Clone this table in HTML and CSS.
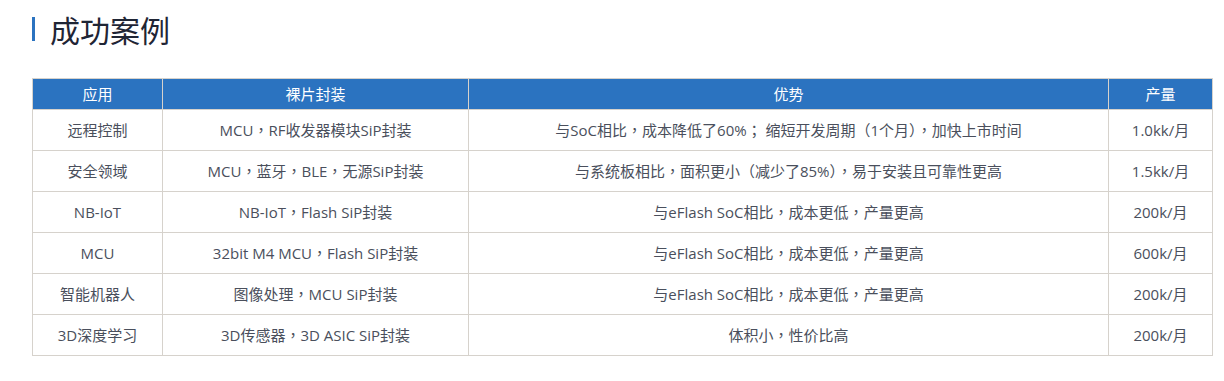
FILE: index.html
```html
<!DOCTYPE html>
<html lang="zh-CN">
<head>
<meta charset="utf-8">
<link rel="stylesheet" href="styles.css">
</head>
<body>
<div class="page">
  <h2 class="title"><span class="bar"></span>成功案例</h2>
  <table class="cases">
    <colgroup>
      <col class="c1"><col class="c2"><col class="c3"><col class="c4">
    </colgroup>
    <thead>
      <tr><th>应用</th><th>裸片封装</th><th>优势</th><th>产量</th></tr>
    </thead>
    <tbody>
      <tr><td>远程控制</td><td>MCU<span class="p" lang="zh-TW">，</span>RF收发器模块SiP封装</td><td>与SoC相比<span class="p" lang="zh-TW">，</span>成本降低了60%<span class="p" lang="zh-TW">；</span> 缩短开发周期（1个月）<span class="p" lang="zh-TW">，</span>加快上市时间</td><td>1.0kk/月</td></tr>
      <tr><td>安全领域</td><td>MCU<span class="p" lang="zh-TW">，</span>蓝牙<span class="p" lang="zh-TW">，</span>BLE<span class="p" lang="zh-TW">，</span>无源SiP封装</td><td>与系统板相比<span class="p" lang="zh-TW">，</span>面积更小（减少了85%）<span class="p" lang="zh-TW">，</span>易于安装且可靠性更高</td><td>1.5kk/月</td></tr>
      <tr><td>NB-IoT</td><td>NB-IoT<span class="p" lang="zh-TW">，</span>Flash SiP封装</td><td>与eFlash SoC相比<span class="p" lang="zh-TW">，</span>成本更低<span class="p" lang="zh-TW">，</span>产量更高</td><td>200k/月</td></tr>
      <tr><td>MCU</td><td>32bit M4 MCU<span class="p" lang="zh-TW">，</span>Flash SiP封装</td><td>与eFlash SoC相比<span class="p" lang="zh-TW">，</span>成本更低<span class="p" lang="zh-TW">，</span>产量更高</td><td>600k/月</td></tr>
      <tr><td>智能机器人</td><td>图像处理<span class="p" lang="zh-TW">，</span>MCU SiP封装</td><td>与eFlash SoC相比<span class="p" lang="zh-TW">，</span>成本更低<span class="p" lang="zh-TW">，</span>产量更高</td><td>200k/月</td></tr>
      <tr><td>3D深度学习</td><td>3D传感器<span class="p" lang="zh-TW">，</span>3D ASIC SiP封装</td><td>体积小<span class="p" lang="zh-TW">，</span>性价比高</td><td>200k/月</td></tr>
    </tbody>
  </table>
</div>
</body>
</html>
```
FILE: styles.css
```css
html, body {
  margin: 0;
  padding: 0;
  background: #fff;
}
.page {
  padding: 12px 0 0 32px;
  font-family: "Open Sans", "Noto Sans CJK SC", sans-serif;
}
.title {
  display: flex;
  align-items: center;
  margin: 0;
  height: 34px;
  font-family: "Noto Sans CJK SC", sans-serif;
  font-size: 30px;
  font-weight: 400;
  color: #1f2535;
}
.bar {
  width: 3px;
  height: 24px;
  background: #2b73c0;
  margin-right: 15px;
}
.cases {
  margin-top: 32px;
  width: 1180px;
  border-collapse: collapse;
  table-layout: fixed;
  font-size: 15px;
}
.c1 { width: 130px; }
.c2 { width: 306px; }
.c3 { width: 640px; }
.c4 { width: 104px; }
.cases th, .cases td {
  border: 1px solid #d6d2cc;
  text-align: center;
  padding: 0;
  font-weight: 400;
  line-height: 20px;
}
.cases th {
  background: #2b73c0;
  color: #fff;
  height: 30px;
}
.cases td {
  color: #4a4f5c;
  height: 40px;
}
.p {
  font-family: "Noto Sans CJK TC", sans-serif;
}
```
